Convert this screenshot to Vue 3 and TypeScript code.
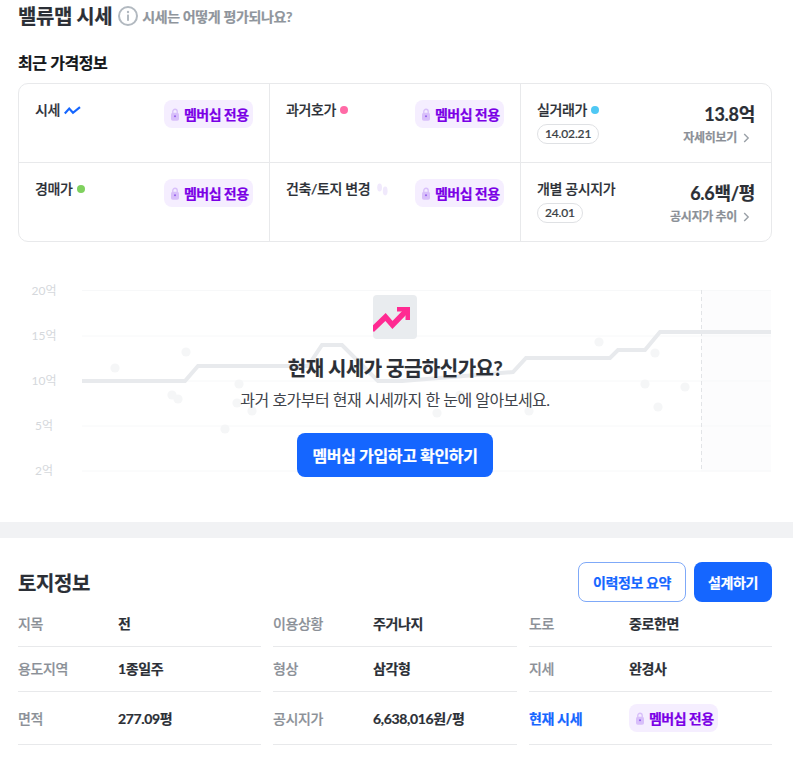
<script setup lang="ts">
const gridYs = [290.5, 336, 381, 426, 471]
const axis = [
  { t: '20억', x: 44, y: 291 },
  { t: '15억', x: 44, y: 336 },
  { t: '10억', x: 44, y: 381 },
  { t: '5억', x: 44, y: 426 },
  { t: '2억', x: 44, y: 471 },
]
const dots = [
  [115, 368], [186, 352], [172, 395], [178, 399], [239, 384], [237, 403], [252, 411], [225, 429],
  [599, 342], [655, 353], [645, 384], [685, 387], [658, 407], [437, 413], [529, 411], [460, 395],
]
const rows = [
  [
    { l: '지목', v: '전' },
    { l: '이용상황', v: '주거나지' },
    { l: '도로', v: '중로한면' },
  ],
  [
    { l: '용도지역', v: '1종일주' },
    { l: '형상', v: '삼각형' },
    { l: '지세', v: '완경사' },
  ],
  [
    { l: '면적', v: '277.09평' },
    { l: '공시지가', v: '6,638,016원/평' },
    { l: '현재 시세', v: '', member: true },
  ],
]
</script>

<template>
  <div class="page">
    <header class="top">
      <h1>밸류맵 시세</h1>
      <svg class="info" width="20" height="20" viewBox="0 0 20 20">
        <circle cx="10" cy="10" r="9" fill="none" stroke="#b2b9c0" stroke-width="2" />
        <circle cx="10" cy="6" r="1.2" fill="#b2b9c0" />
        <rect x="9" y="8.6" width="2" height="6.2" fill="#b2b9c0" />
      </svg>
      <span class="help">시세는 어떻게 평가되나요?</span>
    </header>

    <h2 class="recent">최근 가격정보</h2>

    <div class="card">
      <div class="cell">
        <div class="name">
          시세
          <svg width="17" height="9" viewBox="0 0 17 9"><path d="M.8 7.400 5.200 2.600 9 6.800 16 1.200" fill="none" stroke="#1566ff" stroke-width="2.200" /></svg>
        </div>
        <span class="badge">
          <svg class="lock" width="8" height="13" viewBox="0 0 9 14"><path d="M2 6V3.600a2.500 2.500 0 0 1 5 0V6" fill="none" stroke="#d8bffa" stroke-width="1.500" /><rect y="5" width="9" height="9" rx="2" fill="#d8bffa" /><circle cx="4.500" cy="9" r="1.200" fill="#9a66ee" /></svg>
          멤버십 전용
        </span>
      </div>
      <div class="cell">
        <div class="name">과거호가<i class="dot pink"></i></div>
        <span class="badge">
          <svg class="lock" width="8" height="13" viewBox="0 0 9 14"><path d="M2 6V3.600a2.500 2.500 0 0 1 5 0V6" fill="none" stroke="#d8bffa" stroke-width="1.500" /><rect y="5" width="9" height="9" rx="2" fill="#d8bffa" /><circle cx="4.500" cy="9" r="1.200" fill="#9a66ee" /></svg>
          멤버십 전용
        </span>
      </div>
      <div class="cell last">
        <div>
          <div class="name">실거래가<i class="dot sky"></i></div>
          <span class="pill">14.02.21</span>
        </div>
        <div class="val">
          <strong>13.8억</strong>
          <span class="more">자세히보기<svg width="7" height="10" viewBox="0 0 7 10"><path d="M1.200 1 5.200 5l-4 4" fill="none" stroke="#9aa0a7" stroke-width="1.400" /></svg></span>
        </div>
      </div>
      <div class="cell bottom">
        <div class="name">경매가<i class="dot green"></i></div>
        <span class="badge">
          <svg class="lock" width="8" height="13" viewBox="0 0 9 14"><path d="M2 6V3.600a2.500 2.500 0 0 1 5 0V6" fill="none" stroke="#d8bffa" stroke-width="1.500" /><rect y="5" width="9" height="9" rx="2" fill="#d8bffa" /><circle cx="4.500" cy="9" r="1.200" fill="#9a66ee" /></svg>
          멤버십 전용
        </span>
      </div>
      <div class="cell bottom">
        <div class="name">
          건축/토지 변경
          <svg class="bars" width="11" height="13" viewBox="0 0 11 13"><ellipse cx="2.600" cy="4.600" rx="2.400" ry="4" fill="#f0e9fc" /><ellipse cx="8.200" cy="8" rx="2.400" ry="4.400" fill="#f0e9fc" /></svg>
        </div>
        <span class="badge">
          <svg class="lock" width="8" height="13" viewBox="0 0 9 14"><path d="M2 6V3.600a2.500 2.500 0 0 1 5 0V6" fill="none" stroke="#d8bffa" stroke-width="1.500" /><rect y="5" width="9" height="9" rx="2" fill="#d8bffa" /><circle cx="4.500" cy="9" r="1.200" fill="#9a66ee" /></svg>
          멤버십 전용
        </span>
      </div>
      <div class="cell bottom last">
        <div>
          <div class="name">개별 공시지가</div>
          <span class="pill">24.01</span>
        </div>
        <div class="val">
          <strong>6.6백/평</strong>
          <span class="more">공시지가 추이<svg width="7" height="10" viewBox="0 0 7 10"><path d="M1.200 1 5.200 5l-4 4" fill="none" stroke="#9aa0a7" stroke-width="1.400" /></svg></span>
        </div>
      </div>
    </div>

    <section class="chart">
      <svg class="bg" width="793" height="280" viewBox="0 242 793 280">
        <rect x="701" y="290" width="70" height="182" fill="#fcfcfd" />
        <line v-for="y in gridYs" :key="y" x1="82" x2="771" :y1="y" :y2="y" stroke="#f7f8f9" stroke-width="1" />
        <line x1="701.500" x2="701.500" y1="290" y2="472" stroke="#e2e4e7" stroke-width="1" stroke-dasharray="4 3" />
        <circle v-for="(d, i) in dots" :key="i" :cx="d[0]" :cy="d[1]" r="4.600" fill="#f5f6f7" />
        <path d="M82 381H185L198 366H308L322 345H342L378 381H402L513 372 526 358H610L618 350H645L660 332H771" fill="none" stroke="#e8eaed" stroke-width="4" />
        <text v-for="a in axis" :key="a.t" class="tick" :x="a.x" :y="a.y + 0.500" text-anchor="middle" dominant-baseline="middle">{{ a.t }}</text>
      </svg>
      <div class="promo">
        <div class="tile">
          <svg width="44" height="44" viewBox="0 0 44 44"><path d="M-1 35 12.500 22 19.500 30 35 14" fill="none" stroke="#ff2a92" stroke-width="5.500" /><path d="M24 12H37V25H32.500V16.500H24Z" fill="#ff2a92" /></svg>
        </div>
        <h3>현재 시세가 궁금하신가요?</h3>
        <p>과거 호가부터 현재 시세까지 한 눈에 알아보세요.</p>
        <button class="cta">멤버십 가입하고 확인하기</button>
      </div>
    </section>

    <div class="band"></div>

    <section class="land">
      <div class="land-head">
        <h2>토지정보</h2>
        <div class="actions">
          <button class="outline">이력정보 요약</button>
          <button class="solid">설계하기</button>
        </div>
      </div>
      <div v-for="(row, ri) in rows" :key="ri" class="row" :class="{ tall: ri === 2 }">
        <div v-for="c in row" :key="c.l" class="item">
          <span class="label" :class="{ link: c.member }">{{ c.l }}</span>
          <span v-if="!c.member" class="value">{{ c.v }}</span>
          <span v-else class="badge">
            <svg class="lock" width="8" height="13" viewBox="0 0 9 14"><path d="M2 6V3.600a2.500 2.500 0 0 1 5 0V6" fill="none" stroke="#d8bffa" stroke-width="1.500" /><rect y="5" width="9" height="9" rx="2" fill="#d8bffa" /><circle cx="4.500" cy="9" r="1.200" fill="#9a66ee" /></svg>
            멤버십 전용
          </span>
        </div>
      </div>
    </section>
  </div>
</template>

<style>
html, body { background: #fff; overflow: hidden; }
</style>

<style scoped>
.page {
  width: 793px;
  height: 765px;
  overflow: hidden;
  font-family: Lato, "Noto Sans CJK KR", sans-serif;
  color: #2b2f36;
  box-sizing: border-box;
  -webkit-text-stroke: 0.2px currentColor;
}
h1, h2, h3, p { margin: 0; }
.top {
  display: flex;
  align-items: center;
  padding: 2px 21px 0 18px;
  height: 30px;
  box-sizing: border-box;
}
.top h1 { font-size: 20px; font-weight: 700; line-height: 28px; letter-spacing: -0.45px; }
.info { margin-left: 6px; }
.help { margin-left: 4px; font-size: 14px; font-weight: 700; color: #8f959c; letter-spacing: -0.35px; }
.recent {
  margin: 22px 0 0 18px;
  font-size: 16px;
  font-weight: 700;
  line-height: 22px;
  color: #14171a;
  letter-spacing: -0.4px;
}
.card {
  margin: 9px 21px 0 18px;
  height: 159px;
  box-sizing: border-box;
  display: grid;
  grid-template-columns: 251px 251px 1fr;
  grid-template-rows: 78px 1fr;
  border: 1px solid #e8e9eb;
  border-radius: 10px;
}
.cell {
  display: flex;
  justify-content: space-between;
  align-items: flex-start;
  padding: 16px 16px 0 16px;
  border-right: 1px solid #e8e9eb;
  box-sizing: border-box;
}
.cell.last { border-right: 0; }
.cell.bottom { border-top: 1px solid #e8e9eb; }
.name {
  display: flex;
  align-items: center;
  gap: 4px;
  font-size: 14px;
  font-weight: 500;
  line-height: 20px;
  color: #2b2f36;
  letter-spacing: -0.35px;
}
.bars { margin-left: 3px; }
.dot { display: inline-block; width: 8px; height: 8px; border-radius: 50%; }
.pink { background: #ff6aa6; }
.sky { background: #4fc8f4; }
.green { background: #7fd15e; }
.badge {
  display: inline-flex;
  align-items: center;
  gap: 5px;
  box-sizing: border-box;
  height: 28px;
  width: 89px;
  padding-left: 7px;
  border-radius: 8px;
  background: #f5eeff;
  color: #7a00e6;
  font-size: 14px;
  font-weight: 700;
  letter-spacing: -0.55px;
  white-space: nowrap;
}
.lock { flex: none; }
.pill {
  display: inline-block;
  margin-top: 4px;
  height: 20px;
  line-height: 18px;
  padding: 0 7px;
  box-sizing: border-box;
  border: 1px solid #dfe1e4;
  border-radius: 10px;
  font-size: 12px;
  font-weight: 500;
  color: #3a3f46;
  letter-spacing: -0.15px;
}
.val { display: flex; flex-direction: column; align-items: flex-end; }
.val strong { font-size: 18px; font-weight: 700; line-height: 28px; color: #2b2f36; letter-spacing: -0.3px; }
.more {
  display: flex;
  align-items: center;
  gap: 6px;
  margin-top: 1px;
  padding-right: 5px;
  font-size: 12px;
  font-weight: 700;
  line-height: 18px;
  color: #8b9097;
  letter-spacing: -0.3px;
}
.chart { position: relative; height: 280px; }
.bg { position: absolute; left: 0; top: 0; }
.tick { font-size: 12px; fill: #d5d8dc; stroke: none; -webkit-text-stroke: 0; }
.promo {
  position: relative;
  display: flex;
  flex-direction: column;
  align-items: center;
  padding: 53px 3px 0 0;
}
.tile { width: 44px; height: 44px; background: #e9ecef; border-radius: 4px; overflow: hidden; }
.tile svg { display: block; }
.promo h3 { margin-top: 15px; font-size: 20px; font-weight: 700; line-height: 28px; color: #2b2f36; letter-spacing: -0.5px; }
.promo p { margin-top: 7px; font-size: 16px; font-weight: 400; line-height: 22px; color: #3f444b; letter-spacing: -0.5px; -webkit-text-stroke: 0; }
.cta {
  margin-top: 22px;
  width: 196px;
  height: 44px;
  border: 0;
  border-radius: 8px;
  background: #1566ff;
  color: #fff;
  font: 700 16px Lato, "Noto Sans CJK KR", sans-serif;
  letter-spacing: -0.35px;
}
.band { height: 16px; background: #f1f2f4; }
.land { padding: 24px 21px 0 18px; }
.land-head { display: flex; justify-content: space-between; align-items: center; height: 40px; }
.land-head h2 { font-size: 20px; font-weight: 700; letter-spacing: -0.4px; color: #2b2f36; }
.actions { display: flex; gap: 8px; }
.actions button {
  height: 40px;
  box-sizing: border-box;
  border-radius: 8px;
  font: 700 14px Lato, "Noto Sans CJK KR", sans-serif;
  letter-spacing: -0.4px;
}
.outline { width: 108px; background: #fff; border: 1px solid #7fa9f8; color: #1566ff; }
.solid { width: 78px; background: #1566ff; border: 0; color: #fff; }
.row { display: grid; grid-template-columns: 243px 244px 243px; column-gap: 12px; height: 45px; }
.row.tall { height: 53px; }
.item {
  display: flex;
  align-items: center;
  box-sizing: border-box;
  padding-bottom: 2px;
  border-bottom: 1px solid #e8e9eb;
  font-size: 14px;
  font-weight: 500;
  letter-spacing: -0.35px;
}
.tall .item { padding-bottom: 0; }
.label { width: 100px; flex: none; color: #8b9097; }
.label.link { color: #1566ff; font-weight: 700; }
.value { color: #2b2f36; font-weight: 700; }
</style>
